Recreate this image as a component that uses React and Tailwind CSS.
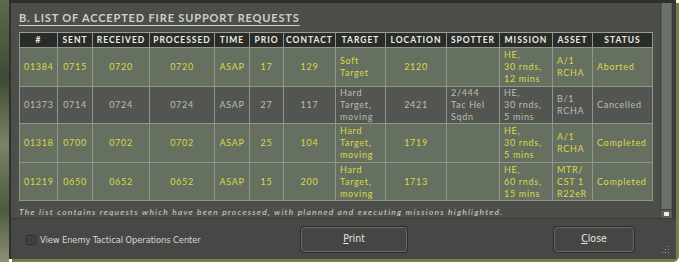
import React from "react";

const cols = [
  { key: "id", label: "#", w: 38, align: "center" },
  { key: "sent", label: "SENT", w: 35, align: "center" },
  { key: "rec", label: "RECEIVED", w: 57, align: "center" },
  { key: "proc", label: "PROCESSED", w: 65, align: "center" },
  { key: "time", label: "TIME", w: 35, align: "center" },
  { key: "prio", label: "PRIO", w: 34, align: "center" },
  { key: "contact", label: "CONTACT", w: 52, align: "center" },
  { key: "target", label: "TARGET", w: 50, align: "left" },
  { key: "loc", label: "LOCATION", w: 61, align: "center" },
  { key: "spotter", label: "SPOTTER", w: 53, align: "left" },
  { key: "mission", label: "MISSION", w: 53, align: "left" },
  { key: "asset", label: "ASSET", w: 40, align: "left" },
  { key: "status", label: "STATUS", w: 60, align: "left" },
];

const rows = [
  {
    hi: true, h: 39,
    id: "01384", sent: "0715", rec: "0720", proc: "0720", time: "ASAP", prio: "17", contact: "129",
    target: ["Soft", "Target"], loc: "2120", spotter: [], mission: ["HE,", "30 rnds,", "12 mins"],
    asset: ["A/1", "RCHA"], status: "Aborted",
  },
  {
    hi: false, h: 37,
    id: "01373", sent: "0714", rec: "0724", proc: "0724", time: "ASAP", prio: "27", contact: "117",
    target: ["Hard", "Target,", "moving"], loc: "2421", spotter: ["2/444", "Tac Hel", "Sqdn"],
    mission: ["HE,", "30 rnds,", "5 mins"], asset: ["B/1", "RCHA"], status: "Cancelled",
  },
  {
    hi: true, h: 39,
    id: "01318", sent: "0700", rec: "0702", proc: "0702", time: "ASAP", prio: "25", contact: "104",
    target: ["Hard", "Target,", "moving"], loc: "1719", spotter: [], mission: ["HE,", "30 rnds,", "5 mins"],
    asset: ["A/1", "RCHA"], status: "Completed",
  },
  {
    hi: true, h: 38,
    id: "01219", sent: "0650", rec: "0652", proc: "0652", time: "ASAP", prio: "15", contact: "200",
    target: ["Hard", "Target,", "moving"], loc: "1713", spotter: [], mission: ["HE,", "60 rnds,", "15 mins"],
    asset: ["MTR/", "CST 1", "R22eR"], status: "Completed",
  },
];

function Cell({ value, align, hi }) {
  const lines = Array.isArray(value) ? value : [value];
  return (
    <td
      className={`border border-[#8f968a] px-[4px] py-0 align-middle ${
        align === "center" ? "text-center" : "text-left"
      } ${hi ? "text-[#dcd848]" : "text-[#bcbdb4]"}`}
    >
      {lines.map((l, i) => (
        <div key={i} className="leading-[12px] whitespace-nowrap">
          {l}
        </div>
      ))}
    </td>
  );
}

export default function App() {
  return (
    <div className="w-[690px] h-[272px] bg-white flex overflow-hidden [font-family:Lato,'Open_Sans',sans-serif]">
      {/* map peeking out on the left */}
      <div className="w-[9px] h-[262px] bg-[linear-gradient(180deg,#5d6a4c_0%,#3f4a35_30%,#7a8466_55%,#4d5a3e_80%,#8b9174_100%)]" />

      <div className="flex flex-col">
        {/* dialog window */}
        <div className="w-[667px] h-[259px] flex flex-col bg-[#3e3f3c] border-t-[3px] border-l-[2px] border-[#2f302e] rounded-br-[6px] shadow-[3px_3px_0_#7d7a4a]">
          <div className="flex h-[215px]">
            {/* main content */}
            <div className="w-[649px] bg-[#4c4f49] pl-[8px] pt-[8px] flex flex-col">
              <div className="text-[11px] font-bold tracking-[0.85px] text-[#cfd0c6] leading-[14px] h-[22px]">
                <span className="underline underline-offset-[3px] decoration-[#cfd0c6]">
                  B. LIST OF ACCEPTED FIRE SUPPORT REQUESTS
                </span>
              </div>
              <table className="table-fixed border-collapse border border-[#9aa095] text-[9px] tracking-[0.7px] w-[634px]">
                <colgroup>
                  {cols.map((c) => (
                    <col key={c.key} style={{ width: c.w }} />
                  ))}
                </colgroup>
                <thead>
                  <tr className="h-[14px] bg-[#2a2c29]">
                    {cols.map((c) => (
                      <th
                        key={c.key}
                        className="border-x border-[#8f968a] font-bold text-[#ececE4] text-[8.5px] tracking-[1px] leading-[14px] text-center px-0"
                      >
                        {c.label}
                      </th>
                    ))}
                  </tr>
                </thead>
                <tbody>
                  {rows.map((r) => (
                    <tr
                      key={r.id}
                      style={{ height: r.h }}
                      className={r.hi ? "bg-[#667060]" : "bg-[#535650]"}
                    >
                      {cols.map((c) => (
                        <Cell key={c.key} value={r[c.key]} align={c.align} hi={r.hi} />
                      ))}
                    </tr>
                  ))}
                </tbody>
              </table>
              <div className="mt-[5px] text-[8.5px] italic tracking-[1.2px] text-[#cfd0c8] leading-[12px] whitespace-nowrap">
                The list contains requests which have been processed, with planned and executing missions highlighted.
              </div>
            </div>

            {/* scrollbar */}
            <div className="w-[12px] flex flex-col bg-[#5a5d57] border-l border-[#454741]">
              <div className="flex-1 bg-[#6c706a] mx-[1px]" />
              <div className="h-[9px] flex items-center justify-center bg-[#5c5f59] border-t border-[#3a3b38]">
                <div className="w-[5px] h-[4px] bg-[#e8e8e8]" />
              </div>
            </div>
            <div className="w-[4px] bg-[#3b3c3a]" />
          </div>

          {/* bottom button bar */}
          <div className="flex-1 bg-[#474846] border-t border-[#3a3b39] flex items-center relative">
            <div className="w-[289px] flex items-center pl-[15px] mt-[2px]">
              <div className="w-[10px] h-[10px] rounded-[2px] bg-[#3d3e3c] border border-[#2c2d2b] shadow-[inset_0_0_2px_#666]" />
              <span className="ml-[4px] text-[9.3px] text-[#d8d8d4] tracking-[-0.1px] [font-family:'DejaVu_Sans_Condensed','Liberation_Sans',sans-serif]">
                View Enemy Tactical Operations Center
              </span>
            </div>
            <button className="w-[108px] h-[27px] rounded-[4px] border border-[#2a2a29] bg-[#454644] shadow-[inset_0_0_0_1px_#6a6b68] text-[10.5px] text-[#e4e4e0] [font-family:'DejaVu_Sans_Condensed','Liberation_Sans',sans-serif]">
              <span className="underline">P</span>rint
            </button>
            <button className="ml-[145px] w-[82px] h-[27px] rounded-[4px] border border-[#2a2a29] bg-[#454644] shadow-[inset_0_0_0_1px_#6a6b68] text-[10.5px] text-[#e4e4e0] [font-family:'DejaVu_Sans_Condensed','Liberation_Sans',sans-serif]">
              <span className="underline">C</span>lose
            </button>
            {/* resize grip */}
            <svg className="absolute right-[6px] bottom-[5px]" width="8" height="8" viewBox="0 0 8 8">
              <g fill="#9a9b96">
                <rect x="6" y="0" width="1" height="1" />
                <rect x="3" y="3" width="1" height="1" />
                <rect x="6" y="3" width="1" height="1" />
                <rect x="0" y="6" width="1" height="1" />
                <rect x="3" y="6" width="1" height="1" />
                <rect x="6" y="6" width="1" height="1" />
              </g>
            </svg>
          </div>
        </div>
      </div>
    </div>
  );
}
